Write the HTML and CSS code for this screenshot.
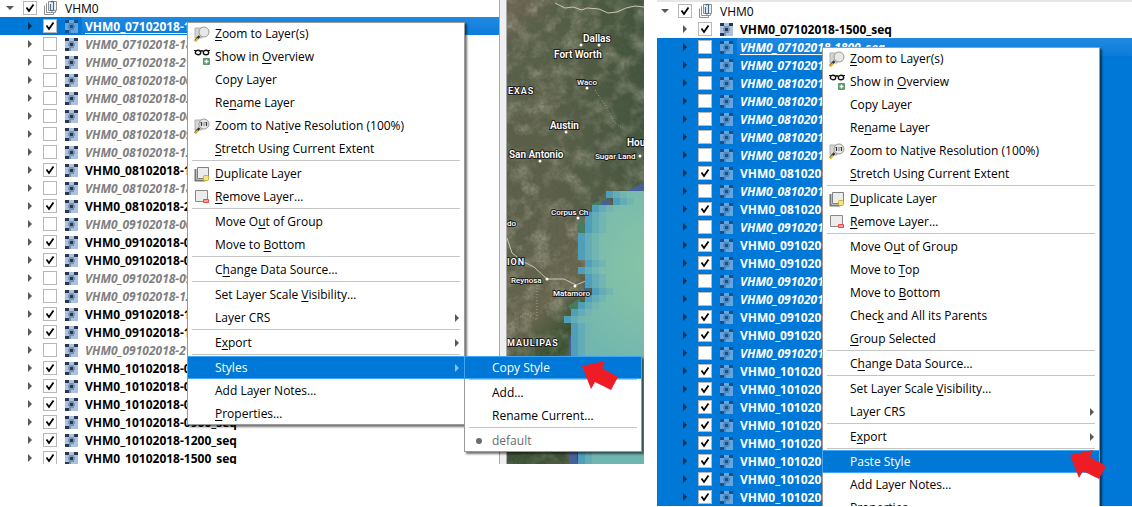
FILE: index.html
```html
<!DOCTYPE html>
<html lang="en">
<head>
<meta charset="utf-8">
<title>Layers</title>
<link rel="stylesheet" href="styles.css">
</head>
<body>
<svg class="sprite" aria-hidden="true">
  <symbol id="caret-right" viewBox="0 0 5 8"><path d="M0 0L4 4L0 8Z" fill="currentColor"/></symbol>
  <symbol id="caret-down" viewBox="0 0 8 4"><path d="M0 0H8L4 4Z" fill="currentColor"/></symbol>
  <symbol id="group" viewBox="0 0 14 16">
    <path d="M0.500 5.500v9H9.500v-2M3 3.500H2.500v9H11.500v-2" fill="none" stroke="#909090"/>
    <path d="M4.500 1.500H12.500V10.500H4.500Z" fill="#f4f4f4" stroke="#909090"/>
    <path d="M6.500 4v5.500a1.500 1.500 0 0 0 3 0V2.300a1.300 1.300 0 0 0-2.500 0" fill="none" stroke="#3e6a94" stroke-width="1.200"/>
  </symbol>
  <symbol id="raster" viewBox="0 0 13 13" shape-rendering="crispEdges">
    <path class="r-light" d="M0 0H13V13H0Z"/>
    <path class="r-dark" d="M0 0H4V3H0ZM9 0H13V3H9ZM5 5H8V8H5ZM0 10H4V13H0Z"/>
    <path class="r-mid" d="M4 3H9V5H4ZM8 5H10V8H8ZM3 5H5V8H3ZM4 8H9V10H4ZM4 10H6V13H4Z"/>
  </symbol>
  <symbol id="zoom" viewBox="0 0 16 16">
    <path d="M1 2H8V12H1Z" fill="#d4d4d0" stroke="#b0b0b0"/>
    <path d="M5.500 10L1 15" stroke="#333" stroke-width="2.400"/><path d="M4 12.500L1 15.500" stroke="#e8b820" stroke-width="2"/>
    <circle cx="10" cy="6" r="5" fill="#e8e8e6" stroke="#999"/>
  </symbol>
  <symbol id="native" viewBox="0 0 16 16">
    <use href="#zoom"/>
    <path d="M7.500 4v4M12.500 4v4M6.500 4.500h1M11.500 4.500h1M10 4.500v1M10 6.500v1" stroke="#333" stroke-width="1.200"/>
  </symbol>
  <symbol id="overview" viewBox="0 0 16 16">
    <path d="M0 1.500h3.500M6.500 2.500Q8 1 9.500 2.500M12.500 1.500H16" fill="none" stroke="#111" stroke-width="1.200"/>
    <ellipse cx="4" cy="3.500" rx="2.700" ry="2.200" fill="#fff" stroke="#111" stroke-width="1.400"/>
    <ellipse cx="12" cy="3.500" rx="2.700" ry="2.200" fill="#fff" stroke="#111" stroke-width="1.400"/>
    <rect x="9" y="9" width="7" height="7" rx="1" fill="#5b9a68"/><path d="M12.500 10.500v4M10.500 12.500h4" stroke="#fff" stroke-width="1.400"/>
  </symbol>
  <symbol id="duplicate" viewBox="0 0 16 16">
    <path d="M1.500 3V14.500H11" fill="none" stroke="#777" stroke-width="2"/><path d="M3.500 1.500H14.500V12.500H3.500Z" fill="#ececea" stroke="#808080"/>
    <rect x="9.500" y="9.500" width="5" height="5" rx="1" fill="#f3e48c" stroke="#d3ae25"/>
  </symbol>
  <symbol id="remove" viewBox="0 0 16 16">
    <path d="M1.500 1.500H13.500V12.500H1.500Z" fill="#ececea" stroke="#888"/>
    <rect x="9" y="10" width="6" height="4" rx="1" fill="#ee4444"/><path d="M10 12h4" stroke="#fff"/>
  </symbol>
</svg>
<main class="page">
  <section class="shot shot-left">
    <ul class="tree" id="tree-left"></ul>
    <div class="splitter"></div>
    <svg class="map" viewBox="507 0 137 464" preserveAspectRatio="xMinYMin slice" role="img" aria-label="Satellite map">
      <defs>
        <linearGradient id="land" x1="0" y1="0" x2="0.300" y2="1">
          <stop offset="0" stop-color="#74675a"/><stop offset="0.120" stop-color="#5a6049"/><stop offset="0.300" stop-color="#5d6048"/>
          <stop offset="0.500" stop-color="#5f614c"/><stop offset="0.680" stop-color="#6c6850"/><stop offset="0.780" stop-color="#38502f"/><stop offset="1" stop-color="#3e5236"/>
        </linearGradient>
        <linearGradient id="east" x1="0" y1="0" x2="1" y2="0"><stop offset="0.300" stop-color="#2d4a33" stop-opacity="0"/><stop offset="1" stop-color="#2d4a33" stop-opacity="0.600"/></linearGradient>
        <radialGradient id="sea" gradientUnits="userSpaceOnUse" cx="640" cy="265" r="110">
          <stop offset="0" stop-color="#89c4a6"/><stop offset="0.450" stop-color="#80bfa9"/><stop offset="1" stop-color="#70b6b0"/>
        </radialGradient>
        <filter id="grain" x="0" y="0" width="1" height="1">
          <feTurbulence type="fractalNoise" baseFrequency="0.320" numOctaves="3" seed="8"/>
          <feColorMatrix values="0 0 0 0 0.080  0 0 0 0 0.110  0 0 0 0 0.060  1.100 0 0 0 -0.420"/>
        </filter>
        <filter id="glint" x="0" y="0" width="1" height="1">
          <feTurbulence type="fractalNoise" baseFrequency="0.060" numOctaves="5" seed="21"/>
          <feColorMatrix values="0 0 0 0 0.620  0 0 0 0 0.580  0 0 0 0 0.480  0 0.900 0 0 -0.380"/>
        </filter>
        <path id="coast" d="M606 191H660V464H578V450H571V323H564V316H571V309H578V302H585V295H592V288H585V274H578V267H585V260H578V233H585V212H592V205H613V198H606Z"/>
      </defs>
      <rect x="507" width="137" height="464" fill="url(#land)"/>
      <rect x="507" width="137" height="220" fill="url(#east)"/>
      <rect x="507" width="137" height="464" filter="url(#glint)"/>
      <rect x="507" width="137" height="464" filter="url(#grain)"/>
      <path class="road" d="M555 3l10 5 8-1 9 3 5-2 12 1 9 4 9-1 9-4 9-2 9 1"/>
      <path class="road" d="M507 238l5 15 10 8 12 6 13 12h17l12 6 12-5"/>
      <path class="trail" d="M537 285v35l-12-7-18 13M595 90l10 15 9 17 7 5"/>
      <path d="M627 191l10-5 7-3v10zM594 206l6-4 10-3v8zM583 226l3-4v50l-2 16 3 15-12 10-6 30v140h8V310l12-10z" fill="#45619b"/>
      <path d="M568 306l12-8 2 8-9 8zM577 228l5-12 4 15-6 8zM590 205l9-4 4-4-2 8z" fill="#477c61"/>
      <use href="#coast" fill="#509fba"/>
      <use href="#coast" x="7" fill="#64acb6"/>
      <use href="#coast" x="14" fill="#73b5b1"/>
      <use href="#coast" x="21" fill="url(#sea)"/>
      <g class="places">
        <text x="583" y="42">Dallas</text><text x="554" y="58">Fort Worth</text><text x="577" y="85" class="minor">Waco</text>
        <text x="508" y="94" class="state">EXAS</text><text x="550" y="129">Austin</text><text x="627" y="146">Hou</text>
        <text x="509" y="158">San Antonio</text><text x="595" y="159" class="minor">Sugar Land</text>
        <text x="551" y="215" class="minor">Corpus Ch</text><text x="507" y="226" class="minor">do</text><text x="507" y="265" class="state">ION</text>
        <text x="511" y="283" class="minor">Reynosa</text><text x="553" y="296" class="minor">Matamoro</text><text x="507" y="346" class="state">MAULIPAS</text>
      </g>
      <path class="towns" d="M581 45h0M599 45h0M587 88h0M566 132h0M540 161h0M640 156h0M578 218h0M547 279h0M575 286h0"/>
    </svg>
    <div class="menu menu-layer" role="menu" id="menu-left"></div>
    <div class="menu menu-styles" role="menu" id="menu-styles"></div>
    <svg class="pointer pointer-copy" viewBox="0 0 37 30"><path d="M0 5L23 0L20 7L36 16L29 29L13 21L9 28Z" fill="#ee1c25"/></svg>
  </section>
  <section class="shot shot-right">
    <ul class="tree" id="tree-right"></ul>
    <div class="menu menu-layer" role="menu" id="menu-right"></div>
    <svg class="pointer pointer-paste" viewBox="0 0 37 30"><path d="M0 5L23 0L20 7L36 16L29 29L13 21L9 28Z" fill="#ee1c25"/></svg>
  </section>
</main>
<script src="app.js"></script>
</body>
</html>
```
FILE: styles.css
```css
* { box-sizing: border-box; }
body {
  margin: 0;
  background: #fff;
  color: #000;
  font: 12px/18px "Open Sans", "Noto Sans", sans-serif;
}
.sprite { position: absolute; width: 0; height: 0; }
.page {
  display: flex;
  gap: 13px;
  height: 100vh;
  overflow: hidden;
}
.shot { position: relative; display: flex; overflow: hidden; }
.shot-left { flex: 644 1 0; height: 464px; }
.shot-right { flex: 475 1 0; height: 506px; border-top: 2px solid #e6e6e6; }
.splitter { flex: none; width: 8px; background: #f0f0f0; border-left: 1px solid #a8a8a8; border-right: 1px solid #a8a8a8; }
.map { flex: 137 1 0; min-width: 0; height: 464px; }

/* layer tree */
.tree { flex: 499 1 0; min-width: 0; margin: 0; padding: 0; list-style: none; }
.shot-left .tree { margin-top: -1px; }
.row { display: flex; align-items: center; height: 18px; padding-left: 28px; white-space: nowrap; color: #000; }
.row.group { padding-left: 6px; }
.shot-right .row { padding-left: 26px; }
.shot-right .row.group { padding-left: 4px; }
.row label { display: flex; align-items: center; flex: 1; height: 18px; }
.caret { flex: none; width: 5px; height: 8px; margin-right: 10px; color: #595959; }
.group .caret { width: 8px; height: 4px; margin-right: 9px; }
.row input {
  appearance: none;
  flex: none;
  width: 14px;
  height: 14px;
  margin: 0 8px 0 0;
  border: 1px solid #b8b8b8;
  background: #fff;
}
.row input:checked {
  background: #fff url("data:image/svg+xml,%3Csvg xmlns='http://www.w3.org/2000/svg' viewBox='0 0 12 12'%3E%3Cpath d='M2.500 5.500L5 9L9.500 2.500' fill='none' stroke='%23000' stroke-width='1.800'/%3E%3C/svg%3E");
}
.group input { margin-right: 7px; }
.group .icon { width: 14px; height: 16px; margin-right: 7px; }
.layer .icon { flex: none; width: 13px; height: 13px; margin-right: 4px; }
.name { flex: 1; align-self: stretch; padding: 1px 0 0 3px; line-height: 17px; font-weight: 700; }
.layer .name { line-height: 18px; }
.group .name { padding-left: 0; font-weight: 400; }
.hidden .name { color: #808080; font-family: "Noto Sans", "Open Sans", sans-serif; font-style: italic; }
.selected { background: #0078d7; }
.selected .name { color: #fff; }
.selected .caret { color: #0b2e4c; }
.current .name { background: linear-gradient(#2089e1, #0c7dda); text-decoration: underline; text-underline-offset: 2px; }
.r-light { fill: #a9c2e0; }
.r-mid { fill: #7c93b3; }
.r-dark { fill: #28374f; }
.layer.selected .icon { opacity: 0.600; }

/* context menus */
.menu {
  position: absolute;
  background: #fff;
  box-shadow: inset 0 0 0 1px #9a9a9a, 2px 2px 2px rgba(0, 0, 0, 0.550);
}
.menu-layer { width: 278px; }
#menu-left { left: 187px; top: 22px; }
#menu-right { left: 165px; top: 45px; }
.menu-styles { left: 464px; top: 356px; width: 178px; }
.item {
  display: flex;
  align-items: center;
  width: 100%;
  height: 23px;
  padding: 0 5px 0 7px;
  border: 1px solid transparent;
  border-width: 1px 0;
  background: none;
  color: #000;
  font: inherit;
  text-align: left;
}
.item .icon { flex: none; width: 16px; height: 16px; margin-right: 5px; }
.item .caption { flex: 1; padding-top: 1px; white-space: nowrap; }
.item u { text-underline-offset: 2px; }
.item .more { width: 5px; height: 8px; color: #595959; }
.item.active { background: #0078d7; border: 1px solid #42a5f5; padding: 0 4px 0 6px; color: #fff; }
.item.active .more { color: #8dc0ec; }
.item:disabled { color: #6d6d6d; }
.bullet { flex: none; width: 6px; height: 6px; margin: 0 10px 0 5px; border-radius: 50%; background: #6d6d6d; }
.menu hr { height: 2px; margin: 0 5px; border: 0; border-top: 1px solid #c4c4c4; }
.pointer { position: absolute; width: 37px; height: 30px; }
.pointer-copy { left: 582px; top: 361px; }
.pointer-paste { left: 413px; top: 448px; }

/* map labels */
.places text { font: 600 10px Roboto, sans-serif; fill: #fff; stroke: #222; stroke-width: 2px; paint-order: stroke; }
.places .minor { font-size: 8px; font-weight: 500; }
.places .state { font-size: 9px; letter-spacing: 1px; }
.road { fill: none; stroke: #c9c5b2; stroke-width: 1px; }
.trail { fill: none; stroke: #a5a58c; stroke-dasharray: 1 2; }
.towns { stroke: #fff; stroke-width: 3px; stroke-linecap: round; }
```
FILE: app.js
```js
const icon = (id, cls) => `<svg class="${cls}"><use href="#${id}"/></svg>`;

// "+" marks a visible layer, "-" a hidden one
const layers = [
  ["07102018", "1500+ 1800- 2100-"],
  ["08102018", "0000- 0300- 0600- 0900- 1200- 1500+ 1800- 2100+"],
  ["09102018", "0000- 0300+ 0600+ 0900- 1200- 1500+ 1800+ 2100-"],
  ["10102018", "0000+ 0300+ 0600+ 0900+ 1200+ 1500+ 1800+ 2100+"]
].flatMap(([day, runs]) => runs.split(" ").map(r => ({ name: `VHM0_${day}-${r.slice(0, 4)}_seq`, on: r[4] === "+" })));

function tree(id, current, isSelected, count) {
  const rows = layers.slice(0, count).map((l, i) => {
    const cls = ["row layer", l.on ? "" : "hidden", isSelected(i) ? "selected" : "", i === current ? "current" : ""].join(" ");
    return `<li class="${cls}">${icon("caret-right", "caret")}<label><input type="checkbox"${l.on ? " checked" : ""}>${icon("raster", "icon")}<span class="name">${l.name}</span></label></li>`;
  });
  document.getElementById(id).innerHTML =
    `<li class="row group">${icon("caret-down", "caret")}<label><input type="checkbox" checked>${icon("group", "icon")}<span class="name">VHM0</span></label></li>` + rows.join("");
}

// "&" precedes the access key; flags: icon:<id>, more, active, bullet
function menu(id, items) {
  document.getElementById(id).innerHTML = items.map(entry => {
    if (entry === "-") return "<hr>";
    const [text, flag = ""] = entry.split("|");
    const lead = flag.startsWith("icon:") ? icon(flag.slice(5), "icon") : flag === "bullet" ? '<span class="bullet"></span>' : '<span class="icon"></span>';
    const more = flag.includes("more") ? icon("caret-right", "more") : "";
    return `<button type="button" role="menuitem" class="item${flag.includes("active") ? " active" : ""}"${flag === "bullet" ? " disabled" : ""}>${lead}<span class="caption">${text.replace(/&(.)/, "<u>$1</u>")}</span>${more}</button>`;
  }).join("");
}

const head = ["&Zoom to Layer(s)|icon:zoom", "Show in &Overview|icon:overview", "Copy Layer", "Re&name Layer",
  "Zoom to Nat&ive Resolution (100%)|icon:native", "&Stretch Using Current Extent", "-",
  "&Duplicate Layer|icon:duplicate", "&Remove Layer…|icon:remove", "-", "Move O&ut of Group"];
const middle = ["-", "C&hange Data Source…", "-", "Set Layer Scale &Visibility…", "Layer CRS|more", "-", "E&xport|more", "-"];
const tail = ["Add Layer Notes…", "&Properties…"];

tree("tree-left", 0, i => i === 0, 25);
tree("tree-right", 1, i => i > 0, 27);
menu("menu-left", [...head, "Move to &Bottom", ...middle, "Styles|active more", ...tail]);
menu("menu-styles", ["Copy Style|active", "-", "Add…", "Rename Current…", "-", "default|bullet"]);
menu("menu-right", [...head, "Move to &Top", "Move to &Bottom", "Chec&k and All its Parents", "&Group Selected", ...middle, "Paste Style|active", ...tail]);
```
